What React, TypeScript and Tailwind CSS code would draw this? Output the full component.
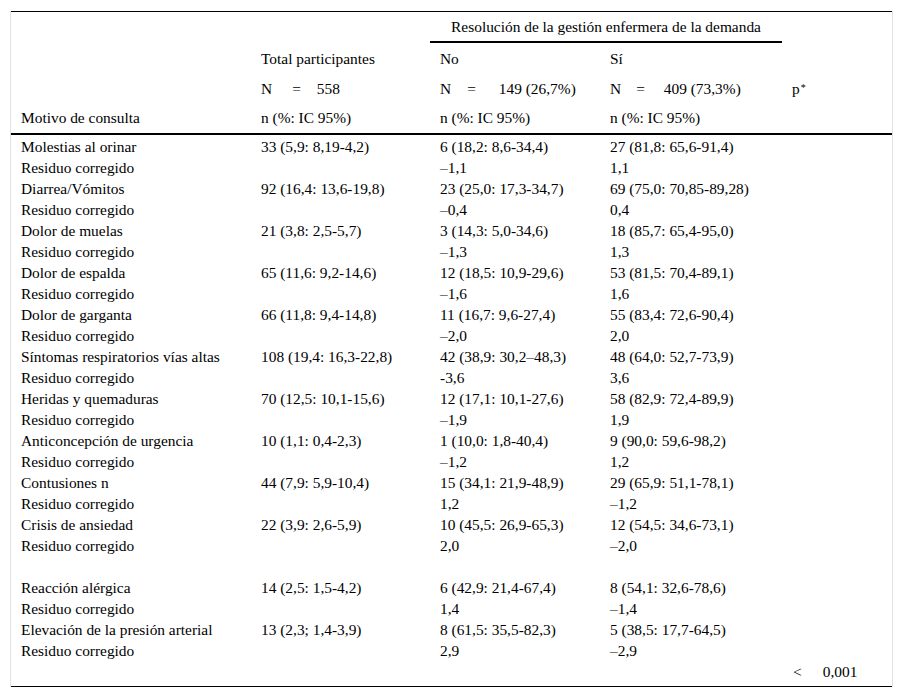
import React from 'react';

type Row = { label: string; total?: string; no?: string; si?: string; p?: string };

const rows: Row[] = [
    { label: 'Molestias al orinar', total: '33 (5,9: 8,19-4,2)', no: '6 (18,2: 8,6-34,4)', si: '27 (81,8: 65,6-91,4)' },
    { label: 'Residuo corregido', no: '–1,1', si: '1,1' },
    { label: 'Diarrea/Vómitos', total: '92 (16,4: 13,6-19,8)', no: '23 (25,0: 17,3-34,7)', si: '69 (75,0: 70,85-89,28)' },
    { label: 'Residuo corregido', no: '–0,4', si: '0,4' },
    { label: 'Dolor de muelas', total: '21 (3,8: 2,5-5,7)', no: '3 (14,3: 5,0-34,6)', si: '18 (85,7: 65,4-95,0)' },
    { label: 'Residuo corregido', no: '–1,3', si: '1,3' },
    { label: 'Dolor de espalda', total: '65 (11,6: 9,2-14,6)', no: '12 (18,5: 10,9-29,6)', si: '53 (81,5: 70,4-89,1)' },
    { label: 'Residuo corregido', no: '–1,6', si: '1,6' },
    { label: 'Dolor de garganta', total: '66 (11,8: 9,4-14,8)', no: '11 (16,7: 9,6-27,4)', si: '55 (83,4: 72,6-90,4)' },
    { label: 'Residuo corregido', no: '–2,0', si: '2,0' },
    { label: 'Síntomas respiratorios vías altas', total: '108 (19,4: 16,3-22,8)', no: '42 (38,9: 30,2–48,3)', si: '48 (64,0: 52,7-73,9)' },
    { label: 'Residuo corregido', no: '-3,6', si: '3,6' },
    { label: 'Heridas y quemaduras', total: '70 (12,5: 10,1-15,6)', no: '12 (17,1: 10,1-27,6)', si: '58 (82,9: 72,4-89,9)' },
    { label: 'Residuo corregido', no: '–1,9', si: '1,9' },
    { label: 'Anticoncepción de urgencia', total: '10 (1,1: 0,4-2,3)', no: '1 (10,0: 1,8-40,4)', si: '9 (90,0: 59,6-98,2)' },
    { label: 'Residuo corregido', no: '–1,2', si: '1,2' },
    { label: 'Contusiones n', total: '44 (7,9: 5,9-10,4)', no: '15 (34,1: 21,9-48,9)', si: '29 (65,9: 51,1-78,1)' },
    { label: 'Residuo corregido', no: '1,2', si: '–1,2' },
    { label: 'Crisis de ansiedad', total: '22 (3,9: 2,6-5,9)', no: '10 (45,5: 26,9-65,3)', si: '12 (54,5: 34,6-73,1)' },
    { label: 'Residuo corregido', no: '2,0', si: '–2,0' },
    { label: '' },
    { label: 'Reacción alérgica', total: '14 (2,5: 1,5-4,2)', no: '6 (42,9: 21,4-67,4)', si: '8 (54,1: 32,6-78,6)' },
    { label: 'Residuo corregido', no: '1,4', si: '–1,4' },
    { label: 'Elevación de la presión arterial', total: '13 (2,3; 1,4-3,9)', no: '8 (61,5: 35,5-82,3)', si: '5 (38,5: 17,7-64,5)' },
    { label: 'Residuo corregido', no: '2,9', si: '–2,9' },
    { label: '', p: '0,001' },
];

export default function App() {
    return (
        <div className="bg-white min-h-screen pl-[10px] pt-[11px] text-[15.4px] text-black font-['Liberation_Serif','Times_New_Roman',serif]">
            <div className="w-[883px] border-x border-[#e2e2e2]">
                <table className="w-[881px] table-fixed border-collapse border-t border-b border-black">
                    <colgroup>
                        <col className="w-[240px]" />
                        <col className="w-[179px]" />
                        <col className="w-[170px]" />
                        <col className="w-[182px]" />
                        <col className="w-[110px]" />
                    </colgroup>
                    <thead>
                        <tr className="h-[30px]">
                            <th />
                            <th />
                            <th colSpan={2} className="border-b-2 border-black font-normal text-center p-0">
                                Resolución de la gestión enfermera de la demanda
                            </th>
                            <th />
                        </tr>
                        <tr className="h-[32px]">
                            <th />
                            <th className="font-normal text-left pl-[10px] pt-[2px]">Total participantes</th>
                            <th className="font-normal text-left pl-[10px] pt-[2px]">No</th>
                            <th className="font-normal text-left pl-[10px] pt-[2px]">Sí</th>
                            <th />
                        </tr>
                        <tr className="h-[30px]">
                            <th />
                            <th className="font-normal text-left pl-[10px] whitespace-nowrap">
                                N<span className="ml-[20px]">=</span><span className="ml-[16px]">558</span>
                            </th>
                            <th className="font-normal text-left pl-[10px] whitespace-nowrap">
                                N<span className="ml-[16px]">=</span><span className="ml-[23px]">149 (26,7%)</span>
                            </th>
                            <th className="font-normal text-left pl-[10px] whitespace-nowrap">
                                N<span className="ml-[15px]">=</span><span className="ml-[19px]">409 (73,3%)</span>
                            </th>
                            <th className="font-normal text-left pl-[10px]">
                                p<sup className="text-[10px] relative -top-[3px] ml-[1px]">*</sup>
                            </th>
                        </tr>
                        <tr className="h-[30px] border-b-2 border-black">
                            <th className="font-normal text-left pl-[10px]">Motivo de consulta</th>
                            <th className="font-normal text-left pl-[10px]">n (%: IC 95%)</th>
                            <th className="font-normal text-left pl-[10px]">n (%: IC 95%)</th>
                            <th className="font-normal text-left pl-[10px]">n (%: IC 95%)</th>
                            <th />
                        </tr>
                    </thead>
                    <tbody>
                        {rows.map((r, i) => {
                            const first = i === 0;
                            const last = i === rows.length - 1;
                            const cell = `leading-[21px] whitespace-nowrap ${first ? 'pt-[1px]' : ''} ${last ? 'pb-[4px]' : ''}`;
                            return (
                                <tr key={i} className={first ? 'h-[22px]' : last ? 'h-[25px]' : 'h-[21px]'}>
                                    <td className={`pl-[10px] ${cell}`}>{r.label}</td>
                                    <td className={`pl-[10px] ${cell}`}>{r.total}</td>
                                    <td className={`pl-[10px] ${cell}`}>{r.no}</td>
                                    <td className={`pl-[10px] ${cell}`}>{r.si}</td>
                                    <td className={`pl-[11px] ${cell}`}>
                                        {r.p && (
                                            <>
                                                &lt;<span className="ml-[21px]">{r.p}</span>
                                            </>
                                        )}
                                    </td>
                                </tr>
                            );
                        })}
                    </tbody>
                </table>
            </div>
        </div>
    );
}
